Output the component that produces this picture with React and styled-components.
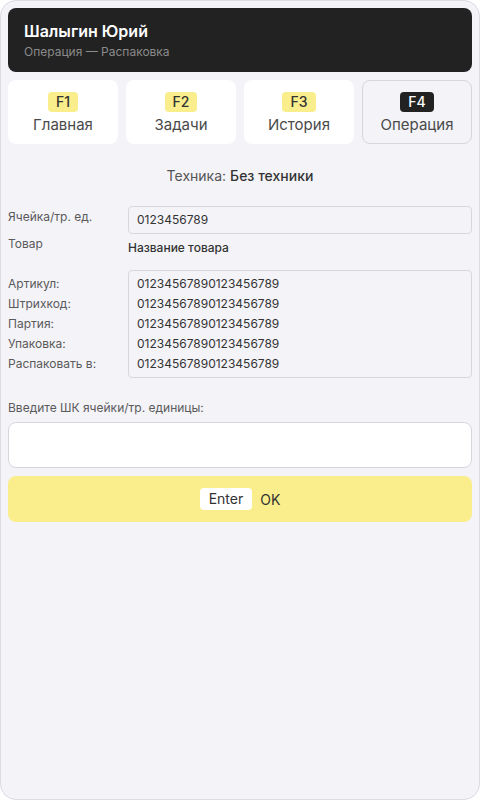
import React from 'react';
import styled, { createGlobalStyle } from 'styled-components';

const Global = createGlobalStyle`
  html, body { margin: 0; padding: 0; background: #ffffff; }
  body { font-family: Inter, "Noto Sans", sans-serif; color: #2b2b2b; }
  * { box-sizing: border-box; }
`;

const Frame = styled.div`
  width: 480px;
  height: 800px;
  background: #f3f3f8;
  border: 1px solid #dcdce2;
  border-radius: 16px;
  padding: 7px;
  display: flex;
  flex-direction: column;
  overflow: hidden;
`;

const Header = styled.div`
  background: #222222;
  border-radius: 8px;
  height: 64px;
  padding: 13px 16px;
  display: flex;
  flex-direction: column;
  gap: 3px;
`;

const Name = styled.div`
  color: #ffffff;
  font-size: 16px;
  font-weight: 600;
  line-height: 20px;
`;

const Sub = styled.div`
  color: #8a8a8a;
  font-size: 12px;
  line-height: 16px;
`;

const Tabs = styled.div`
  display: grid;
  grid-template-columns: repeat(4, 1fr);
  gap: 8px;
  margin-top: 8px;
`;

const Tab = styled.div`
  height: 64px;
  border-radius: 8px;
  background: ${p => (p.$active ? 'transparent' : '#ffffff')};
  border: 1px solid ${p => (p.$active ? '#d6d6dc' : 'transparent')};
  display: flex;
  flex-direction: column;
  align-items: center;
  justify-content: center;
  gap: 4px;
  padding-top: 2px;
`;

const Key = styled.span`
  background: ${p => (p.$active ? '#222222' : '#f9ee8b')};
  color: ${p => (p.$active ? '#ffffff' : '#333333')};
  font-size: 14px;
  font-weight: 500;
  line-height: 20px;
  padding: 0 8px;
  border-radius: 4px;
`;

const TabLabel = styled.span`
  font-size: 15px;
  color: #4a4a4a;
  line-height: 18px;
`;

const Tech = styled.div`
  text-align: center;
  font-size: 14px;
  color: #555555;
  margin-top: 23px;
  line-height: 18px;
  b { font-weight: 500; color: #333333; margin-left: 4px; }
`;

const Row = styled.div`
  display: grid;
  grid-template-columns: 120px 1fr;
  margin-top: ${p => p.$mt || 0}px;
`;

const Labels = styled.div`
  display: flex;
  flex-direction: column;
  padding-top: ${p => p.$pt || 0}px;
`;

const Label = styled.div`
  font-size: 12px;
  color: #5a5a5a;
  line-height: 20px;
`;

const Box = styled.div`
  border: 1px solid #d6d6dc;
  border-radius: 4px;
  padding: 3px 8px;
  font-size: 12px;
  color: #333333;
  line-height: 20px;
`;

const Plain = styled.div`
  font-size: 12px;
  font-weight: 500;
  color: #333333;
  line-height: 20px;
  padding-top: 4px;
`;

const Prompt = styled.div`
  font-size: 12px;
  color: #5a5a5a;
  margin-top: 22px;
  line-height: 16px;
`;

const Input = styled.div`
  margin-top: 6px;
  height: 46px;
  background: #ffffff;
  border: 1px solid #d6d6dc;
  border-radius: 8px;
`;

const Button = styled.div`
  margin-top: 8px;
  height: 46px;
  background: #f9ee8b;
  border-radius: 8px;
  display: flex;
  align-items: center;
  justify-content: center;
  gap: 8px;
  font-size: 14px;
  color: #333333;
`;

const Chip = styled.span`
  background: #ffffff;
  border-radius: 4px;
  padding: 2px 9px;
  line-height: 18px;
`;

const tabs = [
  { k: 'F1', t: 'Главная' },
  { k: 'F2', t: 'Задачи' },
  { k: 'F3', t: 'История' },
  { k: 'F4', t: 'Операция', active: true },
];

const details = [
  ['Артикул:', '01234567890123456789'],
  ['Штрихкод:', '01234567890123456789'],
  ['Партия:', '01234567890123456789'],
  ['Упаковка:', '01234567890123456789'],
  ['Распаковать в:', '01234567890123456789'],
];

export default function App() {
  return (
    <>
      <Global />
      <Frame>
        <Header>
          <Name>Шалыгин Юрий</Name>
          <Sub>Операция — Распаковка</Sub>
        </Header>
        <Tabs>
          {tabs.map(tb => (
            <Tab key={tb.k} $active={tb.active}>
              <Key $active={tb.active}>{tb.k}</Key>
              <TabLabel>{tb.t}</TabLabel>
            </Tab>
          ))}
        </Tabs>
        <Tech>Техника:<b>Без техники</b></Tech>
        <Row $mt={21}>
          <Labels $pt={1}>
            <Label>Ячейка/тр. ед.</Label>
          </Labels>
          <Box>0123456789</Box>
        </Row>
        <Row>
          <Labels>
            <Label>Товар</Label>
          </Labels>
          <Plain>Название товара</Plain>
        </Row>
        <Row $mt={12}>
          <Labels $pt={4}>
            {details.map(d => <Label key={d[0]}>{d[0]}</Label>)}
          </Labels>
          <Box>
            {details.map(d => <div key={d[0]}>{d[1]}</div>)}
          </Box>
        </Row>
        <Prompt>Введите ШК ячейки/тр. единицы:</Prompt>
        <Input />
        <Button>
          <Chip>Enter</Chip>
          <span>OK</span>
        </Button>
      </Frame>
    </>
  );
}
